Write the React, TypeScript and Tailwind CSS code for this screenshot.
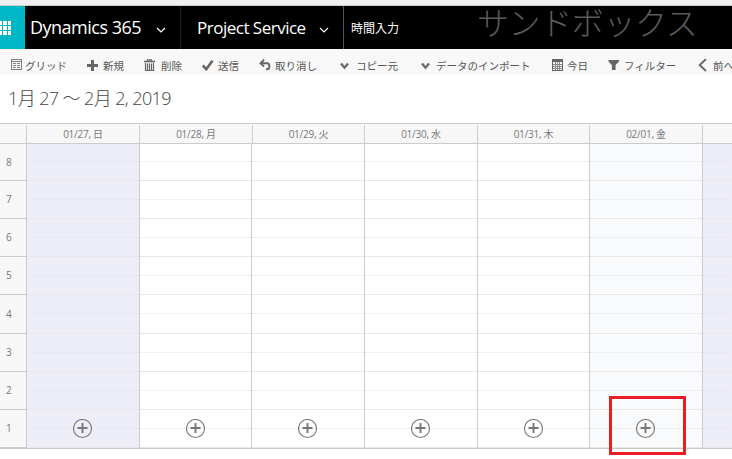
import React from "react";

const days = ["01/27, 日", "01/28, 月", "01/29, 火", "01/30, 水", "01/31, 木", "02/01, 金", ""];
const columns = ["w-[113px]", "w-[112px]", "w-[113px]", "w-[113px]", "w-[112px]", "w-[113px]", "w-[30px]"];
const headerColumns = ["w-[113px]", "w-[113px]", "w-[112px]", "w-[113px]", "w-[112px]", "w-[113px]", "w-[40px]"];
const rows = ["h-[37px]", "h-[38px]", "h-[38px]", "h-[38px]", "h-[39px]", "h-[38px]", "h-[38px]", "h-[38px]"];

function Chevron({ className }: { className: string }) {
  return (
    <svg className={className} width="10" height="6" viewBox="0 0 10 6" fill="none" stroke="white" strokeWidth="1.2">
      <path d="M1 1l4 4 4-4" />
    </svg>
  );
}

const icons = {
  grid: (
    <svg width="12" height="14" viewBox="0 0 12 14" fill="none" stroke="#808080" shapeRendering="crispEdges">
      <path d="M.5 .5h10v10H.5zM.5 2.5h10M2 4.5h3M6 4.5h3M2 6.5h3M6 6.5h3M2 8.5h3M6 8.5h3" />
    </svg>
  ),
  plus: (
    <svg width="12" height="14" viewBox="0 0 12 14" fill="none" stroke="#666" strokeWidth="3">
      <path d="M0 6.5h11M5.5 1v11" />
    </svg>
  ),
  trash: (
    <svg width="12" height="14" viewBox="0 0 12 14" fill="none" stroke="#666">
      <path d="M0 2.5h11" strokeWidth="1.6" />
      <path d="M3.5 2V.8h4V2M1.5 4v7.5h8V4M3.5 4.5V11M5.5 4.5V11M7.5 4.5V11" strokeWidth="1.2" />
    </svg>
  ),
  check: (
    <svg width="12" height="14" viewBox="0 0 12 14" fill="none" stroke="#666" strokeWidth="2.6">
      <path d="M.8 6.5L4.2 10.2 10.5 1.8" />
    </svg>
  ),
  undo: (
    <svg width="12" height="14" viewBox="0 0 12 14" fill="none" stroke="#666" strokeWidth="1.9">
      <path d="M5 .8L1.5 4.2 5 7.6M1.5 4.2H8c3.2 0 3.2 5.8 0 6.1H7" />
    </svg>
  ),
  down: (
    <svg width="10" height="14" viewBox="0 0 10 14" fill="none" stroke="#666c70" strokeWidth="2.4">
      <path d="M1 4.5L4.5 8.7 8 4.5" />
    </svg>
  ),
  calendar: (
    <svg width="12" height="14" viewBox="0 0 12 14" shapeRendering="crispEdges">
      <path d="M0 0h11v12H0z" fill="#666" />
      <path d="M1 3h9v8H1z" fill="white" />
      <path d="M3.5 3v8M5.5 3v8M7.5 3v8M1 5.5h9M1 7.5h9M1 9.5h9" stroke="#888" fill="none" />
    </svg>
  ),
  filter: (
    <svg width="12" height="14" viewBox="0 0 12 14" fill="#666">
      <path d="M.5 1h10.5v1.5L7.6 6v5H3.9V6L.5 2.5z" />
    </svg>
  ),
  back: (
    <svg width="10" height="14" viewBox="0 0 10 14" fill="none" stroke="#666" strokeWidth="1.8">
      <path d="M8 0L1.7 6 8 12" />
    </svg>
  ),
};

const tools: { icon: keyof typeof icons; label: string; width: string; slot: string }[] = [
  { icon: "grid", label: "グリッド", width: "w-[76px]", slot: "w-[14px]" },
  { icon: "plus", label: "新規", width: "w-[57px]", slot: "w-[16px]" },
  { icon: "trash", label: "削除", width: "w-[58px]", slot: "w-[17px]" },
  { icon: "check", label: "送信", width: "w-[57px]", slot: "w-[16px]" },
  { icon: "undo", label: "取り消し", width: "w-[81px]", slot: "w-[16px]" },
  { icon: "down", label: "コピー元", width: "w-[81px]", slot: "w-[16px]" },
  { icon: "down", label: "データのインポート", width: "w-[131px]", slot: "w-[15px]" },
  { icon: "calendar", label: "今日", width: "w-[56px]", slot: "w-[15px]" },
  { icon: "filter", label: "フィルター", width: "w-[90px]", slot: "w-[16px]" },
  { icon: "back", label: "前へ", width: "w-[60px]", slot: "w-[15px]" },
];

function AddButton() {
  return (
    <svg width="20" height="20" viewBox="0 0 20 20" fill="none" stroke="#777">
      <circle cx="9.5" cy="9.5" r="9" strokeWidth="1.1" />
      <path d="M4.5 9h10M9.5 4v10" strokeWidth="1.9" />
    </svg>
  );
}

export default function App() {
  return (
    <div className="relative flex h-[459px] w-[732px] flex-col overflow-hidden bg-white font-['Open_Sans','Noto_Sans_CJK_JP',sans-serif] text-[#666] whitespace-nowrap">
      <div className="h-[6px] shrink-0 border-b border-[#c5cfc8] bg-[#f0f0f0]" />
      <header className="flex h-[43px] shrink-0 bg-black text-white">
        <div className="w-[25px] bg-[#00b7c7] pt-[15px]">
          <svg width="12" height="14" viewBox="0 0 12 14" fill="white" shapeRendering="crispEdges">
            <path d="M0 0h2v4H0zM3 0h4v4H3zM8 0h3v4H8zM0 5h2v4H0zM3 5h4v4H3zM8 5h3v4H8zM0 10h2v4H0zM3 10h4v4H3zM8 10h3v4H8z" />
          </svg>
        </div>
        <div className="flex w-[156px] border-r border-[#1c1c1c] pl-[5px]">
          <span className="w-[126px] text-[18px] leading-[42px] tracking-[-0.5px]">Dynamics 365</span>
          <Chevron className="mt-[21px]" />
        </div>
        <div className="flex w-[163px] border-r border-[#555] pl-[16px]">
          <span className="w-[122px] text-[17px] leading-[44px] tracking-[-0.5px]">Project Service</span>
          <Chevron className="mt-[21px]" />
        </div>
        <div className="w-[133px] pl-[7px] text-[12px] leading-[46px]">時間入力</div>
        <div className="text-[32px] font-light leading-[34px] tracking-[-0.4px] text-[#5a5a5a]">サンドボックス</div>
      </header>
      <nav className="flex h-[26px] shrink-0 bg-[#f8f8f8] pl-[11px] text-[10.5px] text-[#555]">
        {tools.map((t, i) => (
          <div key={i} className={`flex shrink-0 ${t.width}`}>
            <span className={`shrink-0 pt-[10px] ${t.slot}`}>{icons[t.icon]}</span>
            <span className="leading-[35px]">{t.label}</span>
          </div>
        ))}
      </nav>
      <h1 className="h-[48px] shrink-0 pl-[8px] text-[18px] font-light leading-[47px] tracking-[-0.6px] text-[#444]">1月 27 ～ 2月 2, 2019</h1>
      <div className="flex h-[21px] shrink-0 overflow-hidden border-y border-[#ccc] bg-[#f7f7f7] pt-[1px] text-[10px] leading-[18px] tracking-[-0.25px] text-[#777]">
        <div className="w-[27px] shrink-0 border-r border-[#ccc]" />
        {days.map((d, i) => (
          <div key={i} className={`shrink-0 border-r border-[#ccc] text-center ${headerColumns[i]}`}>{d}</div>
        ))}
      </div>
      <div className="flex h-[305px] shrink-0 border-b border-[#c8c8c8]">
        <div className="w-[27px] shrink-0 border-r border-[#ccc] bg-[#f7f7f7]">
          {rows.map((h, i) => (
            <div key={i} className={`flex items-center border-b border-[#ccc] pl-[6px] text-[10px] text-[#777] ${h}`}>{8 - i}</div>
          ))}
        </div>
        {columns.map((w, i) => (
          <div key={i} className={`shrink-0 ${i < 6 ? "border-r border-[#ccc]" : ""} ${w} ${i === 0 || i === 6 ? "bg-[#ededf7]" : i === 5 ? "bg-[#f9fafc]" : "bg-white"}`}>
            {rows.map((h, r) => (
              <div key={r} className={`relative border-b border-[#e8e8e8] ${h}`}>
                <div className={`border-b border-dotted border-[#e4e4e6] ${r === 0 ? "h-[18px]" : "h-[19px]"}`} />
                {r === 7 && i < 6 && (
                  <div className="absolute inset-x-0 top-[9px] flex justify-center"><AddButton /></div>
                )}
              </div>
            ))}
          </div>
        ))}
      </div>
      <div className="absolute left-[609px] top-[396px] h-[59px] w-[77px] border-[3px] border-[#ed1c24]" />
    </div>
  );
}
